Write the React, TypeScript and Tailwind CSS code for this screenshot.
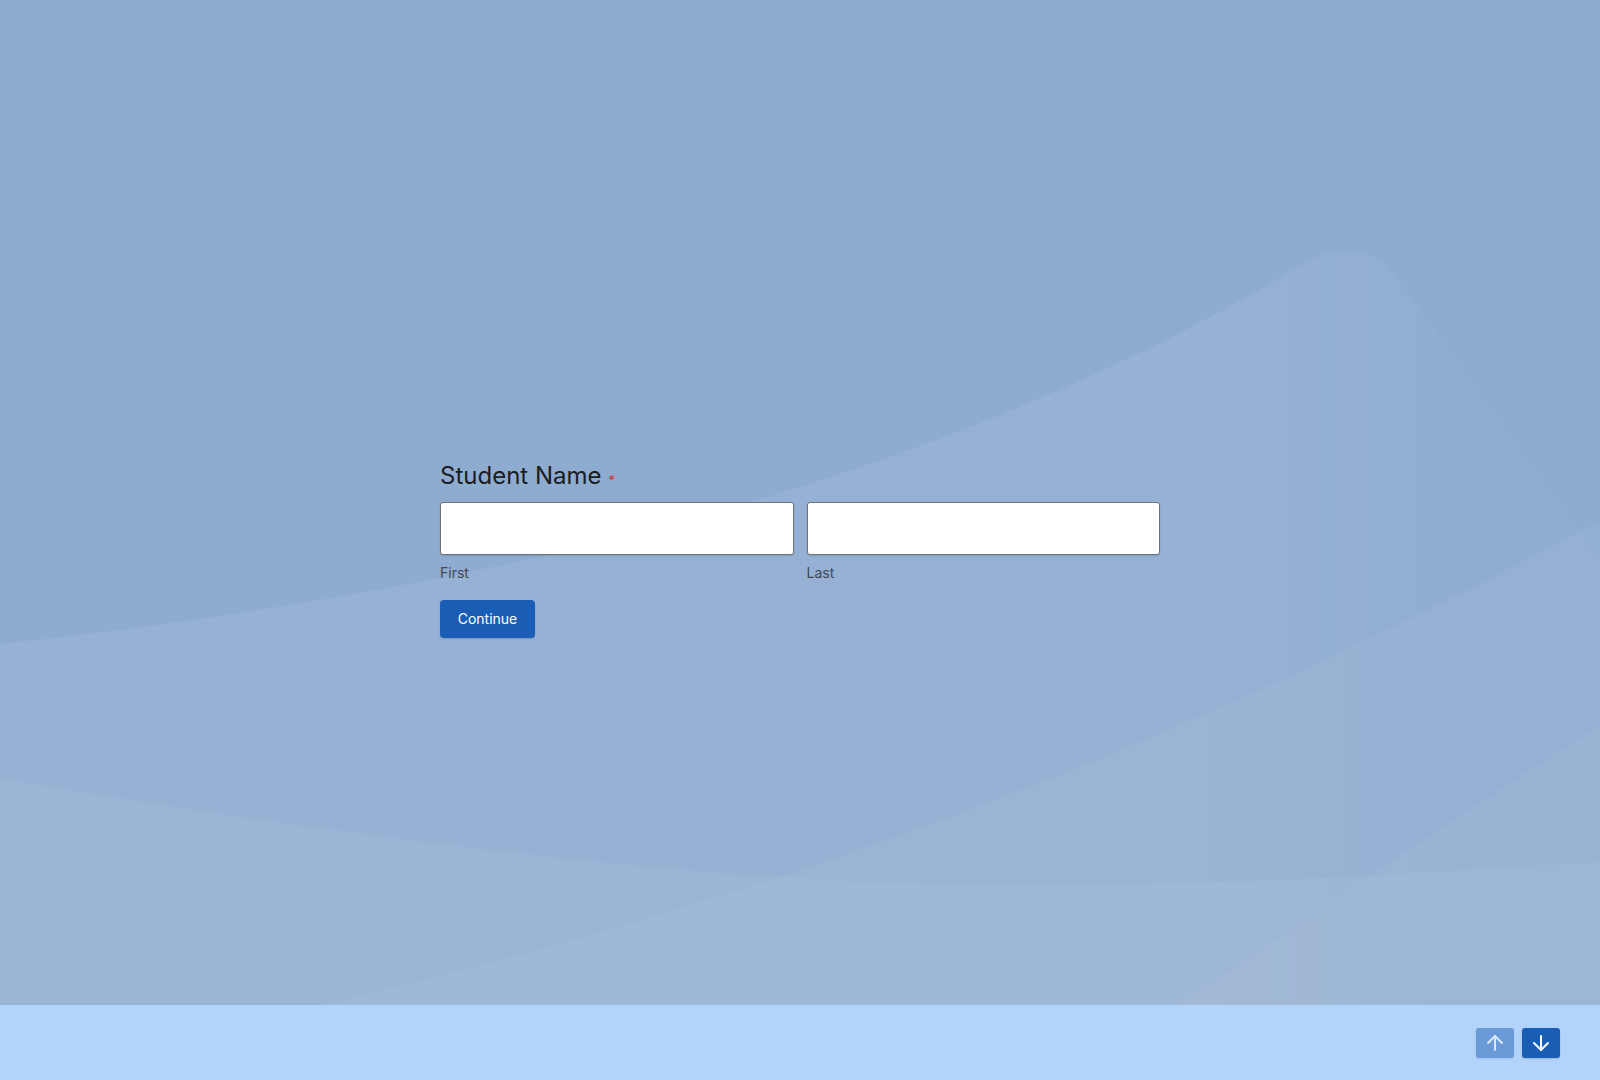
import React from 'react';
import { ArrowUp, ArrowDown } from 'lucide-react';

const Backdrop: React.FC = () => (
    <svg
        className="absolute inset-0 w-full h-full"
        viewBox="0 0 1600 1005"
        preserveAspectRatio="none"
    >
        <defs>
            <linearGradient id="sweepFade" gradientUnits="userSpaceOnUse" x1="1200" y1="0" x2="1480" y2="0">
                <stop offset="0" stopColor="#ffffff" stopOpacity="0.07" />
                <stop offset="1" stopColor="#ffffff" stopOpacity="0.02" />
            </linearGradient>
        </defs>
        {/* soft light sweeps behind the form */}
        <path d="M0 644 C500 590 950 480 1306 262 Q1350 240 1385 262 L1600 560 L1600 1005 L0 1005 Z" fill="url(#sweepFade)" />
        <path d="M0 778 C300 830 700 885 1000 885 S1400 872 1600 862 L1600 1005 L0 1005 Z" fill="#ffffff" fillOpacity="0.05" />
        <path d="M300 1010 Q1000 850 1600 520 L1600 1005 L300 1005 Z" fill="#ffffff" fillOpacity="0.045" />
        <path d="M1180 1005 Q1450 820 1600 725 L1600 1005 Z" fill="#ffffff" fillOpacity="0.04" />
    </svg>
);

const NameField: React.FC<{ label: string }> = ({ label }) => (
    <div className="flex flex-col">
        <input
            type="text"
            className="h-[53px] w-full bg-white border border-[#6d727b] rounded-[3px] shadow-[0_1px_2px_rgba(0,0,0,0.12)] px-3 text-base outline-none"
        />
        <label className="mt-2 text-sm leading-5 text-[#434955]">{label}</label>
    </div>
);

const App: React.FC = () => {
    return (
        <div className="w-full h-[1080px] flex flex-col bg-[#8eabd0] overflow-hidden font-['Inter','Noto_Sans',sans-serif]">
            <main className="relative flex-1">
                <Backdrop />
                <div className="relative mx-auto w-[720px] pt-[460px]">
                    <h1 className="flex items-center text-2xl leading-8 text-[#1b1d20] font-normal">
                        Student Name
                        <span className="ml-[7px] mt-2 text-[13px] leading-none text-[#d3312a]">*</span>
                    </h1>
                    <div className="mt-[10px] grid grid-cols-2 gap-x-[13px]">
                        <NameField label="First" />
                        <NameField label="Last" />
                    </div>
                    <button className="mt-[17px] h-[38px] w-[95px] rounded-[4px] bg-[#1a5db5] text-sm text-white shadow-[0_1px_2px_rgba(0,0,0,0.15)]">
                        Continue
                    </button>
                </div>
            </main>
            <footer className="h-[75px] shrink-0 bg-[#b3d4fa] flex items-center justify-end gap-2 pr-10">
                <button className="w-[38px] h-[30px] rounded-[3px] bg-[#6b9ad8] flex items-center justify-center text-[#dbe7f8] shadow-[0_1px_2px_rgba(0,0,0,0.1)]">
                    <ArrowUp size={24} strokeWidth={2} />
                </button>
                <button className="w-[38px] h-[30px] rounded-[3px] bg-[#1a5db5] flex items-center justify-center text-white shadow-[0_1px_2px_rgba(0,0,0,0.15)]">
                    <ArrowDown size={24} strokeWidth={2} />
                </button>
            </footer>
        </div>
    );
};

export default App;
